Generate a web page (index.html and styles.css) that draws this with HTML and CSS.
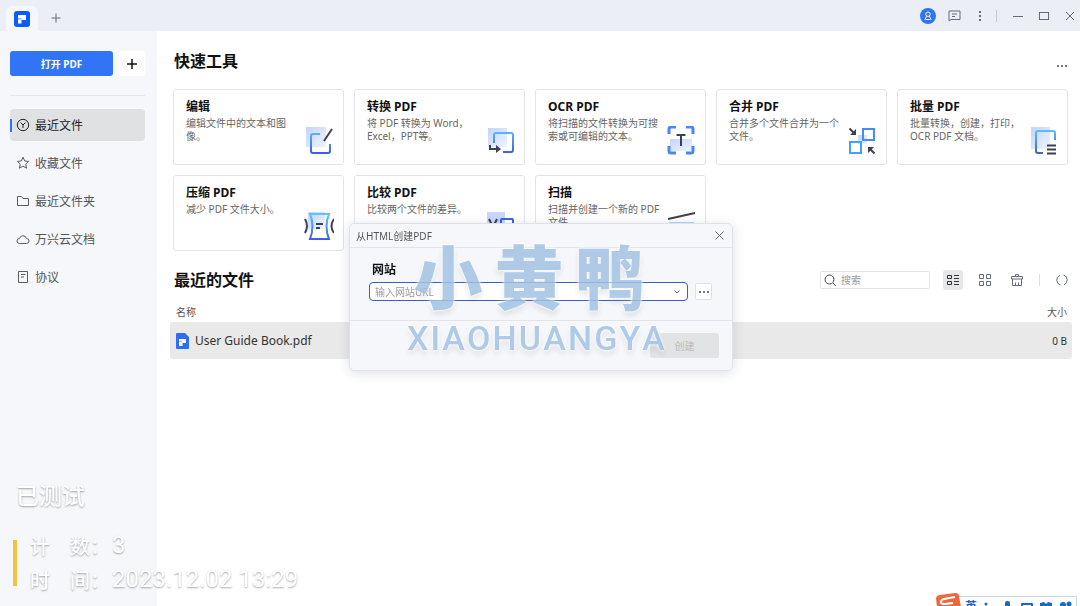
FILE: index.html
```
<!DOCTYPE html>
<html lang="zh-CN">
<head>
<meta charset="UTF-8">
<meta name="viewport" content="width=device-width, initial-scale=1.0">
<title>PDF</title>
<link rel="stylesheet" href="styles.css">
</head>
<body>

<svg class="defs" width="0" height="0" aria-hidden="true">
  <defs>
    <linearGradient id="blue" x1="0" y1="0" x2="0" y2="30" gradientUnits="userSpaceOnUse">
      <stop offset="0.1" stop-color="#5cc4fb"/>
      <stop offset="0.9" stop-color="#3a62e0"/>
    </linearGradient>
    <linearGradient id="pale" x1="0" y1="0" x2="1" y2="1">
      <stop offset="0" stop-color="#c3d4fb"/>
      <stop offset="1" stop-color="#eef3ff"/>
    </linearGradient>
  </defs>
</svg>

<header class="titlebar">
  <div class="tab">
    <svg width="16" height="16" viewBox="0 0 16 16"><rect width="16" height="16" rx="3" fill="#0a5cff"/><path d="M4 4h8v5H7.500v3.500H4V8.200h3.500V7.500H4z" fill="#fff"/></svg>
  </div>
  <button class="icon-btn new-tab" aria-label="新建标签"><svg width="10" height="10" viewBox="0 0 10 10"><path d="M5 0.500v9M0.500 5h9"/></svg></button>
  <div class="window-tools">
    <button class="icon-btn" aria-label="账户"><svg width="16" height="16" viewBox="0 0 16 16"><circle cx="8" cy="8" r="8" fill="#2f74f5" stroke="none"/><path d="M8 4a2.200 2.200 0 1 1 0 4.400A2.200 2.200 0 0 1 8 4zM6.600 8.200L4.800 12M9.400 8.200L11.200 12M6 11.500h4" stroke="#fff"/></svg></button>
    <button class="icon-btn" aria-label="消息"><svg width="13" height="12" viewBox="0 0 13 12"><path d="M1 1h11v8.500H3L1 11zM4 4h5M4 6.500h3"/></svg></button>
    <button class="icon-btn" aria-label="菜单"><svg width="4" height="12" viewBox="0 0 4 12"><path d="M1 1h2v2H1zM1 5h2v2H1zM1 9h2v2H1z" fill="#666b7c" stroke="none"/></svg></button>
    <span class="divider"></span>
    <button class="icon-btn" aria-label="最小化"><svg width="10" height="10" viewBox="0 0 10 10"><path d="M0 5.500h10"/></svg></button>
    <button class="icon-btn" aria-label="最大化"><svg width="10" height="10" viewBox="0 0 10 10"><rect x="0.500" y="1.500" width="9" height="7"/></svg></button>
    <button class="icon-btn" aria-label="关闭"><svg width="10" height="10" viewBox="0 0 10 10"><path d="M1 1l8 8M9 1L1 9"/></svg></button>
  </div>
</header>

<div class="layout">
  <aside class="sidebar">
    <div class="open-row">
      <button class="btn-open">打开 PDF</button>
      <button class="btn-add" aria-label="新建"><svg width="10" height="10" viewBox="0 0 10 10"><path d="M5 0v10M0 5h10" stroke="#111" stroke-width="1.500"/></svg></button>
    </div>
    <nav class="nav">
      <a href="#" class="active"><svg width="14" height="14" viewBox="0 0 14 14"><circle cx="7" cy="7" r="5.700"/><path d="M4.500 4.500L7 7l2.500-2.500M7 7v3"/></svg>最近文件</a>
      <a href="#"><svg width="14" height="14" viewBox="0 0 14 14"><path d="M7 1.200l1.700 3.800 4 .4-3 2.700.9 4.100L7 10.200l-3.600 2 .9-4.100-3-2.700 4-.4z"/></svg>收藏文件</a>
      <a href="#"><svg width="14" height="14" viewBox="0 0 14 14"><path d="M1.500 2.500h4l1.500 2h5.500v7h-11z"/></svg>最近文件夹</a>
      <a href="#"><svg width="14" height="14" viewBox="0 0 14 14"><path d="M3.500 11.500a2.500 2.500 0 0 1 0-5 3.600 3.600 0 0 1 7 0 2.500 2.500 0 0 1 0 5z"/></svg>万兴云文档</a>
      <a href="#"><svg width="14" height="14" viewBox="0 0 14 14"><path d="M2.500 1.500h9v11h-9zM5 4.500h4.500M5 7h3"/></svg>协议</a>
    </nav>
  </aside>

  <main class="main">
    <div class="section-head">
      <h2>快速工具</h2>
      <button class="icon-btn more" aria-label="更多"><svg width="10" height="2" viewBox="0 0 10 2"><path d="M0 0h2v2H0zM4 0h2v2H4zM8 0h2v2H8z" fill="#777" stroke="none"/></svg></button>
    </div>

    <div class="tools">
      <a href="#" class="tool">
        <h3>编辑</h3>
        <div class="tool-body">
          <p>编辑文件中的文本和图像。</p>
          <svg viewBox="0 0 30 30"><rect x="2" y="1" width="20" height="20" fill="url(#pale)"/><path d="M16 8H9a2 2 0 0 0-2 2v15a2 2 0 0 0 2 2h15a2 2 0 0 0 2-2v-7" stroke="url(#blue)" stroke-width="2"/><path d="M20 15L28 3" stroke="#3d4152" stroke-width="2"/></svg>
        </div>
      </a>
      <a href="#" class="tool">
        <h3>转换 PDF</h3>
        <div class="tool-body">
          <p>将 PDF 转换为 Word，Excel，PPT等。</p>
          <svg viewBox="0 0 30 30"><rect x="3" y="2" width="19" height="19" fill="url(#pale)"/><path d="M9 17V9a2 2 0 0 1 2-2h15a2 2 0 0 1 2 2v15a2 2 0 0 1-2 2h-8" stroke="url(#blue)" stroke-width="2"/><path d="M5 19v4h9" stroke="#3d4152" stroke-width="2"/><path d="M11 19l5 4-5 4z" fill="#3d4152"/></svg>
        </div>
      </a>
      <a href="#" class="tool">
        <h3>OCR PDF</h3>
        <div class="tool-body">
          <p>将扫描的文件转换为可搜索或可编辑的文本。</p>
          <svg viewBox="0 0 30 30"><rect x="4" y="13" width="22" height="12" fill="url(#pale)"/><path d="M3 8V3a2 2 0 0 1 2-2h5M20 1h5a2 2 0 0 1 2 2v5M27 20v5a2 2 0 0 1-2 2h-5M10 27H5a2 2 0 0 1-2-2v-5" stroke="#4b87f2" stroke-width="3"/><path d="M10.500 9h9M15 9v11" stroke="#3d4152" stroke-width="2"/></svg>
        </div>
      </a>
      <a href="#" class="tool">
        <h3>合并 PDF</h3>
        <div class="tool-body">
          <p>合并多个文件合并为一个文件。</p>
          <svg viewBox="0 0 30 30"><rect x="11" y="9" width="9" height="9" fill="url(#pale)"/><rect x="16" y="3" width="11" height="11" stroke="#418cf5" stroke-width="2"/><rect x="3" y="16" width="11" height="11" stroke="#469ff8" stroke-width="2"/><path d="M2.500 2.500l5 5M27.500 27.500l-5-5" stroke="#3d4152" stroke-width="2"/><path d="M9 3v6H3zM21 21h6l-6 6z" fill="#3d4152"/></svg>
        </div>
      </a>
      <a href="#" class="tool">
        <h3>批量 PDF</h3>
        <div class="tool-body">
          <p>批量转换，创建，打印，OCR PDF 文档。</p>
          <svg viewBox="0 0 30 30"><rect x="3" y="1" width="19" height="22" fill="url(#pale)"/><path d="M15 27H10a2 2 0 0 1-2-2V7a2 2 0 0 1 2-2h15a2 2 0 0 1 2 2v7" stroke="url(#blue)" stroke-width="2"/><path d="M19 19.500h9M19 23.500h9M19 27.500h9" stroke="#3d4152" stroke-width="2"/></svg>
        </div>
      </a>
      <a href="#" class="tool">
        <h3>压缩 PDF</h3>
        <div class="tool-body">
          <p>减少 PDF 文件大小。</p>
          <svg viewBox="0 0 30 30"><rect x="4" y="0" width="17" height="17" fill="url(#pale)"/><path d="M6 2h19q-5 12 0 25H6q5-13 0-25z" stroke="url(#blue)" stroke-width="2"/><path d="M1 7q4 7 0 14M30 7q-5 7 0 14M12 12h7M12 16h4" stroke="#3d4152" stroke-width="2"/></svg>
        </div>
      </a>
      <a href="#" class="tool">
        <h3>比较 PDF</h3>
        <div class="tool-body">
          <p>比较两个文件的差异。</p>
          <svg viewBox="0 0 30 30"><rect x="2" y="0" width="18" height="22" fill="#c9d6fb"/><path d="M4 7l4 8 4-8" stroke="#3d4152" stroke-width="2"/><rect x="16" y="7" width="12" height="18" rx="1" stroke="#3a62e0" stroke-width="2"/></svg>
        </div>
      </a>
      <a href="#" class="tool">
        <h3>扫描</h3>
        <div class="tool-body">
          <p>扫描并创建一个新的 PDF 文件。</p>
          <svg viewBox="0 0 30 30"><path d="M2 7L29 1" stroke="#3d4152" stroke-width="2"/><path d="M3 11h25" stroke="#a5dcfd" stroke-width="2"/><rect x="3" y="13" width="25" height="12" stroke="url(#blue)" stroke-width="2"/></svg>
        </div>
      </a>
    </div>

    <div class="recent-head">
      <h2>最近的文件</h2>
      <label class="search">
        <svg width="12" height="12" viewBox="0 0 12 12"><circle cx="5.500" cy="5.500" r="4.500"/><path d="M9 9l3 3"/></svg>
        <input type="text" placeholder="搜索" aria-label="搜索">
      </label>
      <div class="view-tools">
        <button class="icon-btn on" aria-label="列表视图"><svg width="12" height="12" viewBox="0 0 12 12"><path d="M0.500 1.500h4v3h-4zM0.500 7.500h4v3h-4zM7 1.500h5M7 4.500h5M7 7.500h5M7 10.500h5"/></svg></button>
        <button class="icon-btn" aria-label="网格视图"><svg width="12" height="12" viewBox="0 0 12 12"><path d="M0.500 0.500h4v4h-4zM7.500 0.500h4v4h-4zM0.500 7.500h4v4h-4zM7.500 7.500h4v4h-4z"/></svg></button>
        <button class="icon-btn" aria-label="清空"><svg width="12" height="12" viewBox="0 0 12 12"><path d="M4.500 2.500v-2h3v2M0.500 5V2.500h11V5zM1.500 5v6.500h9V5M4.500 11V8.500M7.500 11V8.500"/></svg></button>
        <span class="divider"></span>
        <button class="icon-btn" aria-label="刷新"><svg width="12" height="12" viewBox="0 0 12 12"><path d="M4.500 11A5.200 5.200 0 0 1 4 1.200M7.500 1A5.200 5.200 0 0 1 8 10.800"/></svg></button>
      </div>
    </div>

    <table class="files">
      <thead>
        <tr><th>名称</th><th class="size">大小</th></tr>
      </thead>
      <tbody>
        <tr>
          <td>
            <div class="file-name">
              <svg width="13" height="16" viewBox="0 0 13 16"><path d="M1 0h8l4 4v11a1 1 0 0 1-1 1H1a1 1 0 0 1-1-1V1a1 1 0 0 1 1-1z" fill="#2f6fee"/><path d="M3 6h7v4H6.500v3H3V9h3.500V8.500H3z" fill="#fff"/></svg>
              User Guide Book.pdf
            </div>
          </td>
          <td class="size">0 B</td>
        </tr>
      </tbody>
    </table>
  </main>
</div>

<div class="overlay">
  <form class="dialog" role="dialog" aria-labelledby="dialog-title">
    <div class="dialog-head">
      <span id="dialog-title">从HTML创建PDF</span>
      <button type="button" class="icon-btn" aria-label="关闭"><svg width="9" height="9" viewBox="0 0 9 9"><path d="M0.500 0.500l8 8M8.500 0.500l-8 8"/></svg></button>
    </div>
    <div class="dialog-body">
      <label for="url">网站</label>
      <div class="url-row">
        <div class="combo">
          <input type="text" id="url" placeholder="输入网站URL">
          <button type="button" class="icon-btn" aria-label="展开"><svg width="6" height="4" viewBox="0 0 6 4"><path d="M0.500 0.500L3 3l2.500-2.500"/></svg></button>
        </div>
        <button type="button" class="btn-browse" aria-label="浏览"><svg width="10" height="2" viewBox="0 0 10 2"><path d="M0 0h2v2H0zM4 0h2v2H4zM8 0h2v2H8z" fill="#777" stroke="none"/></svg></button>
      </div>
    </div>
    <div class="dialog-foot">
      <button type="submit" class="btn-create" disabled>创建</button>
    </div>
  </form>
</div>

<div class="watermark">
  <div class="mark-cn"><span>小</span><span>黄</span><span>鸭</span></div>
  <div class="mark-en"><span>X</span><span>I</span><span>A</span><span>O</span><span>H</span><span>U</span><span>A</span><span>N</span><span>G</span><span>Y</span><span>A</span></div>
</div>

<div class="stamp">
  <div class="stamp-title">已测试</div>
  <div class="stamp-rows">
    <div class="stamp-row"><span>计　数：</span><b>3</b></div>
    <div class="stamp-row"><span>时　间：</span><b>2023.12.02 13:29</b></div>
  </div>
</div>

<!-- input method bar, mostly below the screen edge -->
<div class="ime">
  <svg class="ime-logo" width="26" height="14" viewBox="0 0 26 14"><path d="M1 5Q2 2 5 2L20 0q4 0 4 3l2 11H2z" fill="#f0683a"/><path d="M20 4L9 6q-4 1-3 4 1 1 4 1l8-1" stroke="#fff" stroke-width="2"/></svg>
  <div class="ime-bar">
    <span>英</span>
    <svg width="92" height="12" viewBox="0 0 92 12"><circle cx="5" cy="7" r="1.500"/><circle cx="8" cy="11" r="1.500"/><rect x="24" y="4" width="5" height="9" rx="2"/><rect x="40" y="6" width="12" height="7" rx="1"/><path d="M42 8.500h8M42 11h8" stroke="#fff"/><path d="M59 6l4-1 2 2 2-2 4 1v6H59z"/><circle cx="82" cy="8" r="3"/><circle cx="88" cy="7" r="2.500"/><rect x="79" y="10" width="12" height="2"/></svg>
  </div>
</div>

</body>
</html>
```
FILE: styles.css
```
* {
    box-sizing: border-box;
}

body {
    margin: 0;
    min-height: 100vh;
    display: flex;
    flex-direction: column;
    overflow: hidden;
    font-family: "Noto Sans", "Noto Sans CJK SC", sans-serif;
    font-size: 12px;
    color: #333;
    background-color: #fff;
}

h2, h3, p {
    margin: 0;
}

a {
    color: inherit;
    text-decoration: none;
}

button, input {
    font-family: inherit;
    border: 0;
    padding: 0;
}

svg {
    display: block;
    flex-shrink: 0;
    fill: none;
}

.defs {
    position: absolute;
}

.icon-btn {
    width: 20px;
    height: 20px;
    display: flex;
    align-items: center;
    justify-content: center;
    background: none;
    border-radius: 3px;
}

.icon-btn svg {
    stroke: #666b7c;
}

.divider {
    width: 1px;
    height: 12px;
    background-color: #c5c9d2;
}

/* Title bar */
.titlebar {
    height: 31px;
    display: flex;
    align-items: center;
    padding-left: 6px;
    background-color: #ebeff5;
}

.tab {
    align-self: flex-end;
    padding: 5px 8px 4px;
    background-color: #f5f7fb;
    border-radius: 6px 6px 0 0;
}

.new-tab {
    margin-top: 4px;
    margin-left: 8px;
}

.window-tools {
    margin-left: auto;
    display: flex;
    align-items: center;
    gap: 6px;
}

.window-tools .divider {
    margin-right: 5px;
}

.layout {
    flex: 1;
    display: flex;
}

/* Sidebar */
.sidebar {
    width: 157px;
    padding: 20px 12px 0 10px;
    background-color: #f5f7fb;
}

.open-row {
    display: flex;
    gap: 6px;
    padding-bottom: 19px;
    border-bottom: 1px solid #e2e5ea;
}

.btn-open {
    flex: 1;
    height: 25px;
    font-size: 10px;
    font-weight: bold;
    color: #fff;
    background-color: #3175f6;
    border-radius: 3px;
}

.btn-add {
    width: 26px;
    height: 25px;
    display: flex;
    align-items: center;
    justify-content: center;
    background-color: #fff;
    border-radius: 3px;
}

.nav {
    display: flex;
    flex-direction: column;
    gap: 6px;
    margin-top: 13px;
}

.nav a {
    height: 32px;
    display: flex;
    align-items: center;
    gap: 5px;
    padding-left: 6px;
    color: #555;
    border-radius: 4px;
}

.nav svg {
    stroke: #5a5d66;
}

.nav .active {
    color: #222;
    background: linear-gradient(#3175f6, #3175f6) left center / 2px 13px no-repeat #e0e1e3;
}

.nav .active svg {
    stroke: #222;
}

/* Main area */
.main {
    flex: 1;
    padding: 18px 8px 0 13px;
}

h2 {
    font-size: 16px;
    line-height: 24px;
    color: #111;
}

.section-head {
    display: flex;
    align-items: flex-end;
    justify-content: space-between;
    margin: 0 0 16px 4px;
}

.more {
    height: 14px;
}

.tools {
    display: grid;
    grid-template-columns: repeat(5, 1fr);
    gap: 10px;
    margin: 0 4px 0 3px;
}

.tool {
    min-height: 76px;
    display: flex;
    flex-direction: column;
    padding: 9px 9px 8px 12px;
    border: 1px solid #e3e4e8;
    border-radius: 3px;
}

.tool h3 {
    font-size: 12px;
    line-height: 16px;
    color: #111;
}

.tool-body {
    flex: 1;
    display: flex;
    margin-top: 2px;
}

.tool p {
    flex: 1;
    font-size: 10px;
    line-height: 13px;
    color: #666;
}

.tool svg {
    width: 30px;
    height: 30px;
    align-self: flex-end;
}

.recent-head {
    height: 20px;
    display: flex;
    align-items: center;
    margin: 19px 0 0 4px;
}

.search {
    width: 110px;
    height: 18px;
    display: flex;
    align-items: center;
    gap: 5px;
    margin-left: auto;
    padding: 0 3px;
    border: 1px solid #e3e4e8;
    border-radius: 2px;
}

.search svg {
    stroke: #444;
}

.search input {
    width: 100%;
    font-size: 10px;
    background: none;
    outline: none;
}

::placeholder {
    color: #999;
    opacity: 1;
}

.view-tools {
    display: flex;
    align-items: center;
    gap: 12px;
    margin-left: 13px;
}

.view-tools .on {
    background-color: #e6e7e9;
}

.view-tools .on svg {
    stroke: #333;
}

.view-tools .divider {
    background-color: #dddfe4;
}

.files {
    width: 100%;
    margin-top: 12px;
    border-collapse: collapse;
}

.files th {
    height: 20px;
    padding: 0 5px 2px 6px;
    font-size: 10px;
    font-weight: normal;
    text-align: left;
    color: #555;
}

.files td {
    height: 37px;
    padding: 0 5px 0 6px;
    background-color: #e9e9e9;
}

.files td:first-child {
    border-radius: 3px 0 0 3px;
}

.files td:last-child {
    border-radius: 0 3px 3px 0;
}

.files .size {
    font-size: 10px;
    text-align: right;
}

.file-name {
    display: flex;
    align-items: center;
    gap: 6px;
}

/* Dialog */
.overlay {
    position: fixed;
    inset: 0;
    display: flex;
    align-items: center;
    justify-content: center;
    padding: 0 0 12px 2px;
}

.dialog {
    width: 384px;
    font-size: 10px;
    background-color: #f5f7fb;
    border: 1px solid #dfe2e8;
    border-radius: 5px;
    box-shadow: 0 2px 12px rgba(40, 50, 80, 0.15);
}

.dialog-head {
    height: 24px;
    display: flex;
    align-items: center;
    justify-content: space-between;
    padding: 0 3px 0 6px;
    color: #555;
    border-bottom: 1px solid #e1e4ea;
}

.dialog-body {
    padding: 14px 20px 19px 19px;
    border-bottom: 1px solid #e1e4ea;
}

.dialog-body label {
    display: block;
    padding-left: 3px;
    font-size: 12px;
    line-height: 16px;
    font-weight: bold;
    color: #111;
}

.url-row {
    display: flex;
    align-items: center;
    gap: 7px;
    margin-top: 4px;
}

.combo {
    flex: 1;
    height: 19px;
    display: flex;
    align-items: center;
    padding-left: 5px;
    background-color: #fff;
    border: 1px solid #3560c4;
    border-radius: 4px;
}

.combo input {
    flex: 1;
    font-size: 10px;
    background: none;
    outline: none;
}

.btn-browse {
    width: 17px;
    height: 17px;
    display: flex;
    align-items: center;
    justify-content: center;
    background-color: #fff;
    border: 1px solid #e0e2e8;
    border-radius: 2px;
}

.dialog-foot {
    display: flex;
    justify-content: flex-end;
    padding: 12px 13px;
}

.btn-create {
    width: 69px;
    height: 25px;
    font-size: 10px;
    color: #bbb;
    background-color: #e2e3e5;
    border-radius: 3px;
}

/* Watermark over the dialog */
.watermark {
    position: fixed;
    inset: 0;
    display: flex;
    flex-direction: column;
    align-items: center;
    justify-content: center;
    padding: 0 8px 14px 0;
    pointer-events: none;
    color: #a3c2e2;
    opacity: 0.85;
    text-shadow: 0 0 2px #fff, 0 0 4px #fff, 0 4px 6px rgba(0, 0, 0, 0.15);
}

.mark-cn {
    display: flex;
    gap: 12px;
    margin-right: 14px;
    font-family: "Noto Sans CJK SC", sans-serif;
    font-size: 69px;
    font-weight: 900;
    line-height: 84px;
}

.mark-en {
    width: 258px;
    display: flex;
    justify-content: space-between;
    font-family: Roboto, sans-serif;
    font-size: 34px;
    font-weight: 500;
    line-height: 44px;
}

/* Test stamp */
.stamp {
    position: fixed;
    left: 13px;
    bottom: 10px;
    color: #fff;
    pointer-events: none;
    text-shadow: 0 1px 2px rgba(0, 0, 0, 0.35);
}

.stamp-title {
    padding-left: 3px;
    font-size: 23px;
    font-weight: 500;
    line-height: 34px;
}

.stamp-rows {
    margin-top: 16px;
    padding-left: 17px;
    background: linear-gradient(#f7c13c, #f7c13c) left bottom 10px / 4px 46px no-repeat;
}

.stamp-row {
    display: flex;
    align-items: center;
    gap: 2px;
    height: 34px;
    font-size: 20px;
    font-weight: 500;
}

.stamp-row b {
    font-family: Roboto, sans-serif;
    font-size: 24px;
    font-weight: normal;
}

.ime {
    position: fixed;
    right: 3px;
    bottom: 0;
    height: 13px;
    display: flex;
    overflow: hidden;
}

.ime-logo {
    z-index: 1;
    margin-right: -9px;
}

.ime-bar {
    height: 20px;
    display: flex;
    gap: 4px;
    margin-top: 3px;
    padding: 0 3px 0 12px;
    font-size: 12px;
    line-height: 20px;
    font-weight: bold;
    color: #1769c8;
    background-color: #fff;
    border: 1px solid #c5d6e8;
}

.ime-bar svg {
    fill: #1769c8;
}
```
